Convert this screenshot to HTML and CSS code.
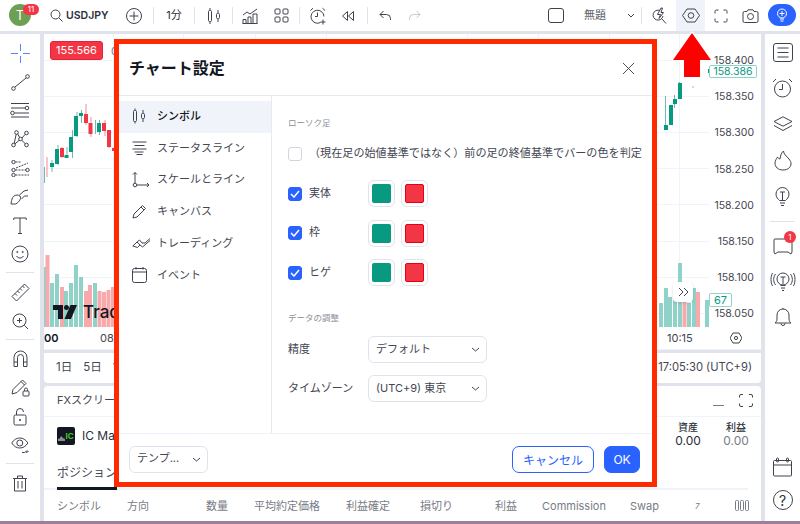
FILE: index.html
```html
<!DOCTYPE html>
<html lang="ja">
<head>
<meta charset="utf-8">
<title>チャート設定</title>
<link rel="stylesheet" href="styles.css">
</head>
<body>
<div class="app">
  <header class="topbar">
    <div class="cell w46"><div class="avatar">T</div><span class="badge-top">11</span></div>
    <div class="cell w74 symbol">
      <svg class="ic" width="13" height="13" viewBox="0 0 13 13"><circle cx="5.5" cy="5.5" r="4.5"/><path d="M9 9l3.5 3.5"/></svg>
      <span>USDJPY</span>
    </div>
    <div class="cell w28"><svg class="ic" width="18" height="18" viewBox="0 0 18 18"><circle cx="9" cy="9" r="7.5"/><path d="M9 4.5v9M4.500 9h9"/></svg></div>
    <i class="vline ml5"></i>
    <div class="cell w40 txt">1分</div>
    <i class="vline"></i>
    <div class="cell w37"><svg class="ic" width="14" height="18" viewBox="0 0 14 18"><rect x="1.500" y="3.500" width="3" height="11" rx="1"/><path d="M3 1v2.500M3 14.500V17M11 3v3.500M11 11.500V15"/><rect x="9.500" y="6.500" width="3" height="5" rx="1"/></svg></div>
    <i class="vline"></i>
    <div class="cell w34"><svg class="ic" width="16" height="16" viewBox="0 0 16 16"><path d="M1 7l4-3 3 2 7-5M1 15.500v-4h3v4M6 15.500V9h3v6.500M11 15.500V6h4v9.500M.5 15.500h15"/></svg></div>
    <div class="cell w28"><svg class="ic" width="15" height="15" viewBox="0 0 15 15"><rect x="1" y="1" width="5" height="5" rx="1"/><rect x="9" y="1" width="5" height="5" rx="1"/><rect x="1" y="9" width="5" height="5" rx="1"/><rect x="9" y="9" width="5" height="5" rx="1"/></svg></div>
    <i class="vline ml4"></i>
    <div class="cell w36"><svg class="ic" width="18" height="18" viewBox="0 0 18 18"><path d="M11.500 15.500A6.500 6.500 0 1 1 15 9.500M1.500 3.500L4 1.200M16 3.500L13.500 1.200M8.500 5.500V9.500H6M14 12.500v5M11.500 15h5"/></svg></div>
    <div class="cell w24"><svg class="ic" width="14" height="12" viewBox="0 0 14 12"><path d="M6.500 1.500L1.500 6l5 4.500zM12.500 1.500L7.500 6l5 4.500z"/></svg></div>
    <i class="vline ml7"></i>
    <div class="cell w34"><svg class="ic" width="12" height="11" viewBox="0 0 12 11"><path d="M4.500 1L1 4.500 4.500 8M1 4.500h6.500a4 4 0 0 1 4 4V10"/></svg></div>
    <div class="cell w26"><svg class="ic dim" width="12" height="11" viewBox="0 0 12 11"><path d="M7.500 1L11 4.500 7.500 8M11 4.500H4.500a4 4 0 0 0-4 4V10"/></svg></div>
    <div class="grow"></div>
    <div class="cell w28"><svg class="ic" width="16" height="15" viewBox="0 0 16 15"><rect x=".5" y=".5" width="15" height="14" rx="2.500"/></svg></div>
    <div class="cell w50 txt muted">無題</div>
    <div class="cell w21"><svg class="ic" width="8" height="5" viewBox="0 0 8 5"><path d="M1 1l3 3 3-3"/></svg></div>
    <i class="vline"></i>
    <div class="cell w34"><svg class="ic" width="16" height="18" viewBox="0 0 16 18"><path d="M9 3.500A5 5 0 1 0 12 9M11 12l4 4.500M10 1L6.500 7.500h3L8 11.500 12.500 5.500H10L11.500 1z"/></svg></div>
    <div class="cell w29 active"><svg class="ic" width="18" height="15" viewBox="0 0 18 15"><path d="M5 1h8l4.500 6.500L13 14H5L.5 7.500z"/><circle cx="9" cy="7.500" r="2.800"/></svg></div>
    <div class="cell w31"><svg class="ic" width="14" height="14" viewBox="0 0 14 14"><path d="M1 4.500V2.500a1.500 1.500 0 0 1 1.500-1.500H4.500M9.500 1h2A1.500 1.500 0 0 1 13 2.500v2M13 9.500v2a1.500 1.500 0 0 1-1.500 1.500h-2M4.500 13h-2A1.500 1.500 0 0 1 1 11.500v-2"/></svg></div>
    <div class="cell w28"><svg class="ic" width="17" height="14" viewBox="0 0 17 14"><path d="M1 4a1.500 1.500 0 0 1 1.500-1.500h2.500L6 .8h5l1 1.700h2.500A1.500 1.500 0 0 1 16 4v8a1.500 1.500 0 0 1-1.500 1.500h-12A1.500 1.500 0 0 1 1 12z"/><circle cx="8.500" cy="7.500" r="3"/></svg></div>
    <div class="cell w36"><div class="bulb-pill"><svg class="ic white" width="12" height="14" viewBox="0 0 12 14"><circle cx="6" cy="5.500" r="4.500"/><path d="M6 3v5M3.500 5.500h5M4 11h4M4.500 13h3"/></svg></div></div>
  </header>

  <div class="main">
    <nav class="lefttools">
      <div class="tool"><svg class="ic blue" width="19" height="19" viewBox="0 0 19 19"><path d="M9.500 0v7M9.500 12v7M0 9.500h7M12 9.500h7"/></svg></div>
      <div class="tool"><svg class="ic" width="19" height="17" viewBox="0 0 19 17"><circle cx="2.500" cy="14.500" r="1.800"/><circle cx="16.500" cy="2.500" r="1.800"/><path d="M4 13L15 4"/></svg></div>
      <div class="tool"><svg class="ic" width="20" height="17" viewBox="0 0 20 17"><path d="M1 1.500h18M1 6h14M1 15h18"/><circle cx="17" cy="6" r="1.800"/><circle cx="2.500" cy="11" r="1.800"/><path d="M4.500 11H19"/></svg></div>
      <div class="tool"><svg class="ic" width="18" height="18" viewBox="0 0 18 18"><circle cx="2.500" cy="15" r="1.800"/><circle cx="5.500" cy="2.500" r="1.800"/><circle cx="15.500" cy="3" r="1.800"/><circle cx="9.500" cy="9" r="1.800"/><circle cx="15.500" cy="15" r="1.800"/><path d="M3.200 13.300L5.200 4.300M6.800 4L8.600 7.500M11 8L14.200 4.300M11 10.500L14.300 13.700M8.200 10.300L3.800 14"/></svg></div>
      <div class="tool"><svg class="ic" width="19" height="17" viewBox="0 0 19 17"><circle cx="2.500" cy="2" r="1.700"/><circle cx="2.500" cy="10" r="1.700"/><circle cx="2.500" cy="15" r="1.700"/><circle cx="16.500" cy="10" r="1.700"/><path d="M4.500 2H10M4.500 10H15M4.500 15H18M5 8L17 3" stroke-dasharray="2 1"/></svg></div>
      <div class="tool"><svg class="ic" width="20" height="17" viewBox="0 0 20 17"><path d="M1 16c0-1 .5-3 1-5s2.500-4 5-4 4 1.500 3.500 3.500S8 15 5.500 16zM9.500 7L14 3l4-1M11.500 11l3-3h3.500"/></svg></div>
      <div class="tool"><svg class="ic" width="14" height="17" viewBox="0 0 14 17"><path d="M.8 3V1h12.400v2M7 1v15.500M5 16.500h4"/></svg></div>
      <div class="tool"><svg class="ic" width="18" height="18" viewBox="0 0 18 18"><circle cx="9" cy="9" r="8"/><circle cx="6.300" cy="7" r=".6"/><circle cx="11.700" cy="7" r=".6"/><path d="M5.500 11c1 1.500 2.200 2 3.500 2s2.500-.5 3.500-2"/></svg></div>
      <i class="hline"></i>
      <div class="tool"><svg class="ic" width="19" height="19" viewBox="0 0 19 19"><path d="M1 13.500L13.500 1 18 5.500 5.500 18zM4 10.500l2 2M6.500 8l2 2M9 5.500l2 2M11.500 3l2 2"/></svg></div>
      <div class="tool"><svg class="ic" width="17" height="17" viewBox="0 0 17 17"><circle cx="7.500" cy="7.500" r="6.500"/><path d="M12.300 12.300L16 16M7.500 5v5M5 7.500h5"/></svg></div>
      <i class="hline"></i>
      <div class="tool"><svg class="ic" width="15" height="18" viewBox="0 0 15 18"><path d="M1 12V7.500a6.500 6.500 0 0 1 13 0V12M4.500 12V7.500a3 3 0 0 1 6 0V12M1 12h3.500v4.500H1zM10.500 12H14v4.500h-3.500z"/></svg></div>
      <div class="tool"><svg class="ic" width="19" height="19" viewBox="0 0 19 19"><path d="M1 16l1-4.500L11.500 2l3.500 3.500L6 14.500zM10 3.500L13.500 7"/><rect x="12" y="13" width="6" height="5" rx="1"/><path d="M13.500 13v-1.500a1.500 1.500 0 0 1 3 0V13"/></svg></div>
      <div class="tool"><svg class="ic" width="14" height="18" viewBox="0 0 14 18"><rect x="1" y="7" width="12" height="10" rx="1.500"/><path d="M3.500 7V4a3.500 3.500 0 0 1 7 0"/><circle cx="7" cy="12" r=".7"/></svg></div>
      <div class="tool"><svg class="ic" width="19" height="19" viewBox="0 0 19 19"><path d="M.8 7c2-3.500 5-5 8-5s6 1.500 8 5c-2 3.500-5 5-8 5s-6-1.500-8-5z"/><circle cx="8.800" cy="7" r="3"/><path d="M11 16.500h2.500l3-2M15 16.500l2.500-1"/></svg></div>
      <i class="hline"></i>
      <div class="tool"><svg class="ic" width="14" height="17" viewBox="0 0 14 17"><path d="M0 3.500h14M4.500 3.500V1h5v2.500M1.500 3.500V16h11V3.500M5 6v7.500M9 6v7.500"/></svg></div>
    </nav>

    <div class="center">
      <section class="chart">
        <div class="plot">
          <svg class="plot-svg" width="665" height="293" viewBox="44 34 665 293">
            <g class="grid">
              <path d="M44 60.500H709M44 96.500H709M44 132.500H709M44 168.500H709M44 204.500H709M44 241.500H709M44 277.500H709M44 313.500H709"/>
              <path d="M113.500 34V327M183.500 34V327M255.500 34V327M326.500 34V327M467.500 34V327M538.500 34V327M609.500 34V327M679.500 34V327"/>
            </g>
            <g class="vol-g">
              <rect x="44" y="267" width="2" height="60"/><rect x="50" y="283" width="4" height="44"/><rect x="55" y="274" width="4" height="53"/><rect x="64" y="291" width="4" height="36"/><rect x="69" y="283" width="4" height="44"/><rect x="74" y="265" width="4" height="62"/><rect x="79" y="277" width="4" height="50"/><rect x="93" y="283" width="4" height="44"/>
              <rect x="659" y="303" width="4" height="24"/><rect x="664" y="288" width="4" height="39"/><rect x="668" y="297" width="4" height="30"/><rect x="673" y="300" width="4" height="27"/><rect x="678" y="263" width="4" height="64"/><rect x="687" y="303" width="4" height="24"/><rect x="692" y="288" width="4" height="39"/><rect x="705" y="300" width="4" height="27"/>
            </g>
            <g class="vol-r">
              <rect x="45.500" y="255" width="4" height="72"/><rect x="60" y="287" width="4" height="40"/><rect x="84" y="291" width="4" height="36"/><rect x="88" y="285" width="4" height="42"/><rect x="97.500" y="291" width="4" height="36"/><rect x="102" y="292" width="4" height="35"/><rect x="106.500" y="290" width="4" height="37"/><rect x="111" y="287" width="4" height="40"/>
              <rect x="682.500" y="296" width="4" height="31"/><rect x="696" y="292" width="4" height="35"/>
            </g>
            <g class="wick-g">
              <path d="M44.500 167V183M52 160V172M58 145V165M67 147V158M72.500 130V158M77 112V137M81.500 110V123M95.500 120V134M99.500 120V135M656.500 128V140M665.500 96V130M674.500 95V108M679.500 82V99"/>
            </g>
            <g class="wick-r">
              <path d="M47 157V177M62 147V158M86 104V125M91 117V137M105 120V136M109 130V148"/>
            </g>
            <g class="body-g">
              <rect x="50" y="163" width="4" height="4"/><rect x="55" y="149" width="4" height="15"/><rect x="64.500" y="155" width="4" height="3"/><rect x="69" y="137" width="4" height="15"/><rect x="74" y="116" width="4" height="20"/><rect x="79" y="113" width="4" height="3"/><rect x="97" y="123" width="4" height="9"/>
              <rect x="664" y="125" width="4" height="5"/><rect x="669" y="105" width="4" height="20"/><rect x="673" y="99" width="4" height="5"/><rect x="678" y="83" width="4" height="16"/><rect x="692.500" y="86.500" width="1" height="1"/><rect x="708" y="69" width="1" height="4"/>
            </g>
            <g class="body-r">
              <rect x="60" y="148" width="4" height="9"/><rect x="84" y="114" width="4" height="9"/><rect x="88.500" y="123" width="4" height="11"/><rect x="102" y="123" width="4" height="8"/><rect x="107" y="130" width="4" height="17"/><rect x="112" y="148" width="3" height="3"/>
            </g>
          </svg>
          <div class="price-flag">155.566</div>
          <span class="price-next">0.000</span>
          <div class="watermark">
            <svg class="tv-logo" width="24" height="14" viewBox="0 0 24 14"><path d="M0 0H10V14H5V5H0zM24 0L18 14H11.500L17.500 0z"/><circle cx="13.500" cy="2.500" r="2.500"/></svg>
            <span>TradingView</span>
          </div>
          <div class="expand-btn"><svg class="ic" width="11" height="10" viewBox="0 0 11 10"><path d="M1 1l4 4-4 4M6 1l4 4-4 4"/></svg></div>
        </div>
        <div class="prices">
          <span>158.400</span><span>158.350</span><span>158.300</span><span>158.250</span><span>158.200</span><span>158.150</span><span>158.100</span><span>158.050</span>
          <b class="tag tag-price">158.386</b>
          <b class="tag tag-vol">67</b>
        </div>
        <div class="times">
          <b>00</b><span class="t-08">08:00</span><span class="t-1015">10:15</span>
        </div>
        <div class="corner"><svg class="ic" width="12" height="12" viewBox="0 0 12 12"><path d="M3 1h6l3 5-3 5H3L0 6z"/><circle cx="6" cy="6" r="1.600"/></svg></div>
      </section>

      <section class="rangebar">
        <div class="ranges"><span>1日</span><span>5日</span><span>1ヶ月</span></div>
        <span class="clock">17:05:30 (UTC+9)</span>
      </section>

      <section class="panel">
        <div class="panel-head">
          <span>FXスクリーナー</span>
          <div class="panel-actions">
            <i class="minimize"></i>
            <svg class="ic" width="14" height="13" viewBox="0 0 14 13"><path d="M.5 3.500V2A1.500 1.500 0 0 1 2 .5h2M10 .5h2A1.500 1.500 0 0 1 13.500 2v1.500M13.500 9.500V11A1.500 1.500 0 0 1 12 12.500h-2M4 12.500H2A1.500 1.500 0 0 1 .5 11V9.500"/></svg>
          </div>
        </div>
        <div class="account">
          <div class="broker">
            <div class="ic-logo"><svg width="7" height="6" viewBox="0 0 7 6"><path d="M0 6V4l2-1 1-2 2 2 2 1v2z"/></svg><b>IC</b></div>
            <span>IC Markets</span>
          </div>
          <div class="stat s1"><b>資産</b><span>0.00</span></div>
          <div class="stat s2"><b>利益</b><span class="muted">0.00</span></div>
        </div>
        <div class="tabs"><span class="tab">ポジション</span></div>
        <div class="thead">
          <span>シンボル</span><span>方向</span><span>数量</span><span>平均約定価格</span><span>利益確定</span><span>損切り</span><span>利益</span><span>Commission</span><span>Swap</span><span class="small">7</span>
          <svg class="ic gray" width="14" height="11" viewBox="0 0 14 11"><rect x=".5" y=".5" width="3" height="10" rx="1"/><rect x="5.500" y=".5" width="3" height="10" rx="1"/><rect x="10.500" y=".5" width="3" height="10" rx="1"/></svg>
        </div>
      </section>
    </div>

    <nav class="righttools">
      <div class="rtool r36"><svg class="ic" width="20" height="19" viewBox="0 0 20 19"><rect x=".5" y=".5" width="19" height="18" rx="2.500"/><path d="M4.500 5h11M4.500 9.500h11M4.500 14h11"/></svg></div>
      <div class="rtool r36"><svg class="ic" width="21" height="20" viewBox="0 0 21 20"><circle cx="10.500" cy="11" r="8"/><path d="M1 4l3-3M20 4l-3-3M10.500 6v5.500H7"/></svg></div>
      <div class="rtool r36"><svg class="ic" width="20" height="16" viewBox="0 0 20 16"><path d="M10 .8L19 5.500 10 10.200 1 5.500zM1 9.500l9 5 9-5"/></svg></div>
      <div class="rtool r36"><svg class="ic" width="18" height="21" viewBox="0 0 18 21"><path d="M9 20C4 20 1 17 1 13c0-2.500 1.500-4 2.500-6C4 8 5 9 6 9 6.500 6 7 3 9.500 1c0 3 3 5 5.500 8 1.500 2 2 3 2 5 0 3-3 6-8 6z"/></svg></div>
      <div class="rtool r36"><svg class="ic" width="15" height="20" viewBox="0 0 15 20"><path d="M4.500 14.500C3 13 1 11.500 1 8a6.500 6.500 0 0 1 13 0c0 3.500-2 5-3.500 6.500zM5 6h5M7.500 6v8.500M5 17h5M6 19.500h3"/></svg></div>
      <i class="hline rh"></i>
      <div class="rtool r355"><svg class="ic" width="20" height="19" viewBox="0 0 20 19"><path d="M2 2h16a1 1 0 0 1 1 1v12l-1 2-3-2H5l-3 2-1-2V3a1 1 0 0 1 1-1z"/></svg><span class="badge-chat">1</span></div>
      <div class="rtool r355"><svg class="ic" width="26" height="22" viewBox="0 0 26 22"><circle cx="13" cy="8" r="6"/><path d="M10.500 14.500h5M11 17h4M12 19.500h2M10.500 6h5M13 6v7M5.500 3C3 7 3 10 5.500 14M2.500 2C.5 6 .5 11 2.500 15M20.500 3c2.500 4 2.500 7 0 11M23.500 2c2 4 2 9 0 13"/></svg></div>
      <div class="rtool r355"><svg class="ic" width="18" height="20" viewBox="0 0 18 20"><path d="M1 16c1-1 2-2 2-4V8a6 6 0 0 1 12 0v4c0 2 1 3 2 4zM9 1V2M7 16.500a2 2 0 0 0 4 0"/></svg></div>
      <div class="rgrow"></div>
      <div class="rtool r33"><svg class="ic" width="19" height="20" viewBox="0 0 19 20"><path d="M.5 4.500a1 1 0 0 1 1-1h16a1 1 0 0 1 1 1V18a1 1 0 0 1-1 1h-16a1 1 0 0 1-1-1zM.5 8h18"/><rect x="3.500" y="1" width="2" height="4" rx="1"/><rect x="13.500" y="1" width="2" height="4" rx="1"/></svg></div>
      <div class="rtool r33"><svg class="ic" width="20" height="20" viewBox="0 0 20 20"><circle cx="10" cy="10" r="9.500"/></svg><span class="help">?</span></div>
    </nav>
  </div>
  <div class="wallpaper"></div>
</div>

<svg class="arrow" width="46" height="50" viewBox="0 0 46 50">
  <path d="M23 2L42 29H31V46H15V29H4z" stroke-linejoin="round"/>
</svg>

<div class="modal">
  <div class="modal-head">
    <h1>チャート設定</h1>
    <svg class="ic close" width="13" height="13" viewBox="0 0 14 14"><path d="M1 1l12 12M13 1L1 13"/></svg>
  </div>
  <div class="modal-body">
    <aside class="side">
      <div class="side-item selected"><svg class="ic" width="14" height="16" viewBox="0 0 14 16"><rect x="1.500" y="2.500" width="3" height="11" rx="1"/><path d="M3 .5v2M3 13.500v2M11 2v3.500M11 10.500V14"/><rect x="9.500" y="5.500" width="3" height="5" rx="1"/></svg><span>シンボル</span></div>
      <div class="side-item"><svg class="ic" width="15" height="14" viewBox="0 0 15 14"><path d="M.5 1h14M2.500 4.500h10M.5 8h14M2.500 11h9M4.500 13.500h6"/></svg><span>ステータスライン</span></div>
      <div class="side-item"><svg class="ic" width="18" height="17" viewBox="0 0 18 17"><circle cx="3" cy="14" r="1.800"/><path d="M3 12V1.500M1 3.500l2-2 2 2M5 14h12M15 12l2 2-2 2"/></svg><span>スケールとライン</span></div>
      <div class="side-item"><svg class="ic" width="15" height="15" viewBox="0 0 15 15"><path d="M1 14l1-4L10.500 1.500l3 3L5 13zM9 3l3 3"/></svg><span>キャンバス</span></div>
      <div class="side-item"><svg class="ic" width="19" height="12" viewBox="0 0 19 12"><path d="M.8 9L5 5l3 3-2.500 2.500zM5 5l2.500-2L10 6l3 0 5-4.500M8 8l2.500 2L18 3.500"/></svg><span>トレーディング</span></div>
      <div class="side-item"><svg class="ic" width="15" height="16" viewBox="0 0 15 16"><rect x=".5" y="1.500" width="14" height="14" rx="2"/><path d="M.5 5h14M4 0v2.500M11 0v2.500"/></svg><span>イベント</span></div>
    </aside>
    <div class="content">
      <h2 class="sec first">ローソク足</h2>
      <label class="check-row wide"><i class="cb"></i><span>（現在足の始値基準ではなく）前の足の終値基準でバーの色を判定</span></label>
      <div class="colors">
        <div class="color-row">
          <label class="check-row"><i class="cb on"><svg width="10" height="8" viewBox="0 0 10 8"><path d="M1 4l3 3 5-6"/></svg></i><span>実体</span></label>
          <div class="swatch"><i class="up"></i></div><div class="swatch"><i class="down"></i></div>
        </div>
        <div class="color-row">
          <label class="check-row"><i class="cb on"><svg width="10" height="8" viewBox="0 0 10 8"><path d="M1 4l3 3 5-6"/></svg></i><span>枠</span></label>
          <div class="swatch"><i class="up"></i></div><div class="swatch"><i class="down"></i></div>
        </div>
        <div class="color-row">
          <label class="check-row"><i class="cb on"><svg width="10" height="8" viewBox="0 0 10 8"><path d="M1 4l3 3 5-6"/></svg></i><span>ヒゲ</span></label>
          <div class="swatch"><i class="up"></i></div><div class="swatch"><i class="down"></i></div>
        </div>
      </div>
      <h2 class="sec second">データの調整</h2>
      <div class="fields">
        <div class="field"><span class="field-label">精度</span><div class="select wide-sel"><span>デフォルト</span><svg class="ic" width="9" height="5" viewBox="0 0 9 5"><path d="M1 1l3.500 3L8 1"/></svg></div></div>
        <div class="field"><span class="field-label">タイムゾーン</span><div class="select wide-sel"><span>(UTC+9) 東京</span><svg class="ic" width="9" height="5" viewBox="0 0 9 5"><path d="M1 1l3.500 3L8 1"/></svg></div></div>
      </div>
    </div>
  </div>
  <div class="modal-foot">
    <div class="select tmpl"><span>テンプ...</span><svg class="ic" width="9" height="5" viewBox="0 0 9 5"><path d="M1 1l3.500 3L8 1"/></svg></div>
    <div class="foot-btns">
      <button class="btn ghost" type="button">キャンセル</button>
      <button class="btn primary" type="button">OK</button>
    </div>
  </div>
</div>
</body>
</html>
```

FILE: styles.css
```css
* { box-sizing: border-box; }
html, body { margin: 0; height: 100%; overflow: hidden; }
body {
  position: relative;
  width: 800px;
  height: 524px;
  background: #e0e3eb;
  color: #2a2e39;
  font-family: Inter, "Noto Sans CJK JP", sans-serif;
  font-size: 11px;
  line-height: 14px;
}
i { font-style: normal; display: block; }
h1, h2 { margin: 0; font-weight: 400; }
.app { display: flex; flex-direction: column; height: 524px; }

/* icons */
.ic { fill: none; stroke: #3f434e; stroke-width: 1; display: block; flex: none; }
.ic.dim { stroke: #c4c7cf; }
.ic.blue { stroke: #5b85f5; }
.ic.white { stroke: #fff; }
.ic.gray { stroke: #787b86; }

/* top bar */
.topbar { height: 31px; margin-bottom: 3px; background: #fff; display: flex; align-items: stretch; flex: none; }
.cell { display: flex; align-items: center; justify-content: center; position: relative; height: 31px; flex: none; }
.w21 { width: 21px; } .w24 { width: 24px; } .w26 { width: 26px; } .w28 { width: 28px; }
.w29 { width: 29px; } .w31 { width: 31px; } .w34 { width: 34px; } .w36 { width: 36px; }
.w37 { width: 37px; } .w40 { width: 40px; } .w46 { width: 46px; justify-content: flex-start; padding-left: 9px; }
.w50 { width: 50px; } .w74 { width: 74px; }
.grow { flex: 1; }
.vline { width: 1px; height: 17px; background: #e0e3eb; align-self: center; flex: none; }
.ml4 { margin-left: 4px; } .ml5 { margin-left: 5px; } .ml7 { margin-left: 7px; }
.avatar { width: 22px; height: 22px; margin-top: -1px; border-radius: 50%; background: #6f9e55; color: #fff; font-size: 13px; text-align: center; line-height: 22px; }
.badge-top { position: absolute; left: 23px; top: 4px; width: 16px; height: 11px; border-radius: 6px; background: #f23645; color: #fff; font-size: 8px; line-height: 11px; text-align: center; }
.symbol { justify-content: flex-start; gap: 3px; padding-left: 4px; font-size: 10.500px; font-weight: 600; }
.txt { font-size: 11px; color: #2a2e39; padding-bottom: 2px; }
.muted { color: #787b86; }
.txt.muted { color: #5d606b; }
.active { background: #f0f3fa; }
.bulb-pill { width: 28px; height: 22px; margin-top: -1px; border-radius: 11px; background: #2962ff; display: flex; align-items: center; justify-content: center; }

/* main */
.main { flex: 1; min-height: 0; display: flex; gap: 4px; }
.lefttools { width: 40px; background: #fff; padding-top: 5px; flex: none; }
.tool { height: 28.7px; display: flex; align-items: center; justify-content: center; }
.hline { height: 1px; background: #e0e3eb; margin: 3.500px 6px 5px; }
.center { width: 717px; display: flex; flex-direction: column; gap: 3px; flex: none; }
.righttools { flex: 1; background: #fff; display: flex; flex-direction: column; padding-bottom: 4.500px; }
.rtool { display: flex; align-items: center; justify-content: center; position: relative; }
.r36 { height: 36px; } .r355 { height: 35.500px; } .r33 { height: 33px; }
.rh { margin: 7px 5px 6.500px; }
.rgrow { flex: 1; }
.badge-chat { position: absolute; left: 19px; top: 2px; width: 12px; height: 12px; border-radius: 50%; background: #f23645; color: #fff; font-size: 8px; line-height: 12px; text-align: center; }
.help { position: absolute; inset: 0; text-align: center; line-height: 33px; font-size: 14px; }

/* chart */
.chart { display: grid; grid-template-columns: 665px 52px; grid-template-rows: 293px 22px; background: #fff; border-bottom: 1px solid #f0f3fa; position: relative; height: 316px; flex: none; }
.plot { position: relative; overflow: hidden; }
.plot-svg { display: block; }
.grid path { stroke: #f0f3fa; stroke-width: 1; fill: none; }
.vol-g rect { fill: #8fd3c8; }
.vol-r rect { fill: #f9a8ac; }
.wick-g path { stroke: #6cbdae; stroke-width: 1; fill: none; }
.wick-r path { stroke: #f28b91; stroke-width: 1; fill: none; }
.body-g rect { fill: #089981; }
.body-r rect { fill: #f23645; }
.price-flag { position: absolute; left: 6px; top: 7px; width: 53px; height: 19px; background: #f23645; border: 1px solid #e8202f; border-radius: 3px; color: #fff; font-size: 11px; line-height: 17px; text-align: center; }
.price-next { position: absolute; left: 67px; top: 10px; color: #787b86; font-size: 11px; }
.watermark { position: absolute; left: 9px; top: 268px; display: flex; align-items: center; gap: 6px; color: #131722; font-size: 17px; font-weight: 500; line-height: 20px; white-space: nowrap; }
.tv-logo { fill: #131722; }
.expand-btn { position: absolute; left: 629px; top: 248px; width: 20px; height: 20px; border-radius: 4px; background: #fff; box-shadow: 0 1px 3px rgba(0,0,0,.15); display: flex; align-items: center; justify-content: center; }
.prices { display: flex; flex-direction: column; padding-top: 9px; background: #fff; position: relative; }
.prices span { height: 36.200px; line-height: 36.200px; font-size: 10.500px; color: #434651; text-align: right; padding-right: 7px; flex: none; }
.tag { position: absolute; left: 0; background: #fff; border: 1px solid #8fd3c8; color: #089981; font-weight: 400; font-size: 10.500px; text-align: center; border-radius: 2px; height: 13px; line-height: 11px; }
.tag-price { top: 31px; width: 48px; }
.tag-vol { top: 259px; height: 14px; line-height: 12px; width: 23px; font-size: 11px; }
.times { position: relative; display: flex; align-items: center; overflow: hidden; font-size: 11px; color: #434651; }
.times b { font-weight: 600; color: #131722; width: 56px; }
.t-08 { width: 567px; }
.corner { display: flex; align-items: center; justify-content: center; padding-left: 1px; }
.rangebar { height: 30px; background: #fff; display: flex; justify-content: space-between; align-items: center; padding: 0 9px 2px 12px; border-radius: 0 0 4px 4px; color: #434651; font-size: 11.500px; flex: none; }
.ranges { display: flex; gap: 11px; }
.clock { font-size: 11.200px; }
.panel { flex: 1; background: #fff; border-radius: 4px 4px 0 0; display: flex; flex-direction: column; min-height: 0; }
.panel-head { height: 31px; border-bottom: 1px solid #f0f3fa; display: flex; justify-content: space-between; align-items: center; padding: 0 8px 2px 13px; color: #434651; flex: none; }
.panel-actions { display: flex; align-items: center; gap: 15px; }
.minimize { width: 11px; height: 1px; background: #787b86; margin-top: 10px; }
.account { height: 46px; position: relative; padding: 10px 0 0 13px; flex: none; }
.broker { display: flex; align-items: center; gap: 7px; font-size: 12px; color: #2a2e39; }
.ic-logo { width: 18px; height: 18px; background: #131722; border-radius: 2px; color: #43c92f; font-size: 8px; line-height: 18px; display: flex; align-items: center; justify-content: center; }
.ic-logo svg { fill: #8a8d96; display: block; margin-top: 3px; }
.ic-logo b { font-weight: 700; }
.stat { position: absolute; top: 3px; display: flex; flex-direction: column; align-items: center; line-height: 14px; }
.stat b { font-weight: 500; font-size: 10px; }
.stat span { font-size: 12px; }
.s1 { left: 628px; width: 32px; }
.s2 { left: 676px; width: 32px; }
.tabs { height: 27px; border-bottom: 2px solid #f0f3fa; margin-right: 13px; padding-left: 13px; flex: none; }
.tab { display: block; height: 27px; line-height: 20px; border-bottom: 3px solid #131722; font-size: 12px; color: #434651; width: 60px; white-space: nowrap; }
.thead { flex: 1; display: grid; grid-template-columns: 70px 79px 48px 92px 74px 75px 47px 88px 65px 40px 14px; align-items: center; padding-left: 13px; color: #787b86; font-size: 11px; white-space: nowrap; }
.small { font-size: 8px; font-style: italic; }
.wallpaper { height: 3px; background: #9b7f9b; flex: none; }

/* arrow */
.arrow { position: absolute; left: 669px; top: 31px; fill: #ff0000; stroke: #fff; stroke-width: 3px; paint-order: stroke; }

/* modal */
.modal { position: absolute; left: 114px; top: 39px; width: 543px; height: 448px; background: #fff; border: 5px solid #ff2a00; display: flex; flex-direction: column; }
.modal-head { height: 52px; border-bottom: 1px solid #e8eaf0; display: flex; align-items: center; justify-content: space-between; padding: 0 17px 3px 10px; flex: none; }
.modal-head h1 { font-size: 16px; line-height: 20px; font-weight: 600; color: #131722; }
.modal-body { flex: 1; display: flex; min-height: 0; }
.side { width: 153px; border-right: 1px solid #e8eaf0; padding-top: 5px; flex: none; }
.side-item { height: 31.800px; display: flex; align-items: center; padding: 0 0 2px 13px; color: #434651; font-size: 11px; position: relative; }
.side-item span { margin-left: auto; width: 114px; }
.selected { background: #f0f3fa; color: #131722; font-weight: 500; }
.content { flex: 1; padding-left: 16px; }
.sec { height: 12px; line-height: 12px; font-size: 8.500px; color: #8c8f99; }
.first { margin-top: 21px; }
.second { margin-top: 26px; }
.check-row { display: flex; align-items: center; gap: 7px; font-size: 11px; color: #434651; height: 14px; }
.check-row span { margin-top: -2px; }
.wide { margin-top: 18px; white-space: nowrap; font-size: 11.100px; }
.cb { width: 14px; height: 14px; border: 1px solid #d1d4dc; border-radius: 3px; background: #fff; display: flex; align-items: center; justify-content: center; flex: none; }
.cb.on { background: #2962ff; border-color: #2962ff; }
.cb svg { fill: none; stroke: #fff; stroke-width: 1.500; display: block; }
.colors { margin-top: 19px; display: flex; flex-direction: column; gap: 12.500px; }
.color-row { display: flex; gap: 6px; align-items: center; height: 27px; }
.color-row .check-row { width: 74px; }
.swatch { width: 27px; height: 27px; border: 1px solid #e0e3eb; border-radius: 6px; display: flex; align-items: center; justify-content: center; }
.swatch i { width: 19px; height: 19px; border-radius: 2px; }
.swatch .up { background: #089981; }
.swatch .down { background: #f23645; border: 1px solid #e8000f; }
.fields { margin-top: 12px; display: flex; flex-direction: column; gap: 12px; }
.field { display: flex; align-items: center; }
.field-label { width: 80px; color: #434651; margin-top: -2px; }
.select { display: flex; align-items: center; justify-content: space-between; height: 27px; border: 1px solid #e0e3eb; border-radius: 6px; padding: 0 6px 0 7px; background: #fff; color: #434651; font-size: 11px; }
.select span { margin-top: -2px; }
.wide-sel { width: 119px; }
.tmpl { width: 79px; }
.modal-foot { height: 49px; border-top: 1px solid #f0f3fa; display: flex; align-items: center; justify-content: space-between; padding: 2px 12px 0 10px; flex: none; }
.foot-btns { display: flex; gap: 10px; }
.btn { height: 27px; border-radius: 7px; font-family: inherit; font-size: 12px; padding: 0; cursor: pointer; }
.ghost { width: 82px; background: #fff; border: 1px solid #2962ff; color: #2962ff; }
.primary { width: 36px; background: #2962ff; border: 1px solid #2962ff; color: #fff; }
```
